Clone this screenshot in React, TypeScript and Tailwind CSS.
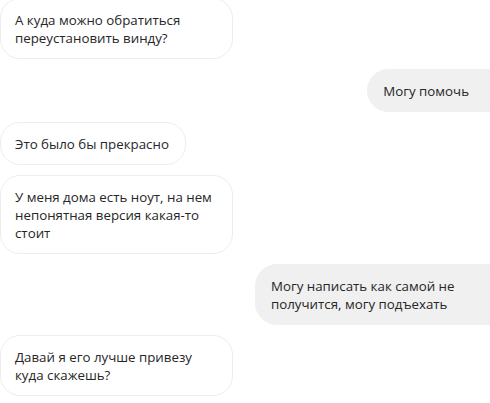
import React from "react";

type Msg = { side: "in" | "out"; lines: string[]; wide?: boolean };

const messages: Msg[] = [
  { side: "in", lines: ["А куда можно обратиться", "переустановить винду?"], wide: true },
  { side: "out", lines: ["Могу помочь"] },
  { side: "in", lines: ["Это было бы прекрасно"] },
  { side: "in", lines: ["У меня дома есть ноут, на нем", "непонятная версия какая-то", "стоит"], wide: true },
  { side: "out", lines: ["Могу написать как самой не", "получится, могу подъехать"], wide: true },
  { side: "in", lines: ["Давай я его лучше привезу", "куда скажешь?"], wide: true },
];

const App = () => {
  return (
    <div className="w-[490px] h-[403px] overflow-hidden bg-white">
      <div className="flex flex-col gap-[10px] -mt-[2px] font-['Open_Sans',sans-serif] text-[13.3px] leading-[18px] text-[#262626]">
        {messages.map((m, i) =>
          m.side === "in" ? (
            <div key={i} className="flex justify-start">
              <div
                className={`rounded-[20px] border border-[#ededed] bg-white pl-[14px] pr-4 py-[11.5px] ${
                  m.wide ? "w-[233px]" : ""
                }`}
              >
                {m.lines.map((l, j) => (
                  <div key={j} className="whitespace-nowrap">{l}</div>
                ))}
              </div>
            </div>
          ) : (
            <div key={i} className="flex justify-end">
              <div
                className={`rounded-l-[22px] bg-[#f0f0f0] border border-[#f0f0f0] pl-[15px] pr-5 py-[11.5px] ${
                  m.wide ? "w-[235px]" : ""
                }`}
              >
                {m.lines.map((l, j) => (
                  <div key={j} className="whitespace-nowrap">{l}</div>
                ))}
              </div>
            </div>
          )
        )}
      </div>
    </div>
  );
};

export default App;
